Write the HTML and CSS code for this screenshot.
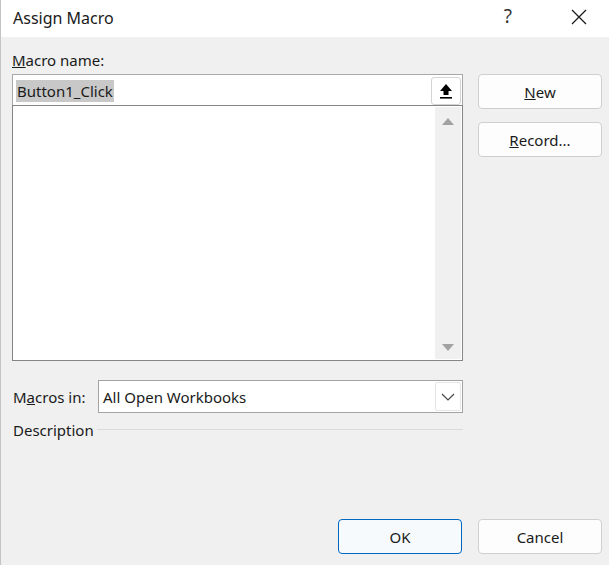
FILE: index.html
```html
<!DOCTYPE html>
<html>
<head>
<meta charset="utf-8">
<link rel="stylesheet" href="styles.css">
</head>
<body>
<div class="window">
  <div class="titlebar">
    <span class="title">Assign Macro</span>
    <span class="help">?</span>
    <span class="close">
      <svg width="16" height="16" viewBox="0 0 16 16"><path d="M1 1 L15 15 M15 1 L1 15" stroke="#1b1b1b" stroke-width="1.3" fill="none"/></svg>
    </span>
  </div>
  <div class="content">
    <div class="top">
      <div class="left">
        <div class="label"><u>M</u>acro name:</div>
        <div class="namebox">
          <span class="selected">Button1_Click</span>
          <span class="upbtn">
            <svg width="14" height="16" viewBox="0 0 14 16"><path d="M7 1 L13 8 L9.5 8 L9.5 12 L4.5 12 L4.5 8 L1 8 Z" fill="#000"/><rect x="1" y="14" width="12" height="1.6" fill="#000"/></svg>
          </span>
        </div>
        <div class="listbox">
          <div class="items"></div>
          <div class="scroll">
            <svg class="arr" width="14" height="9" viewBox="0 0 14 9"><path d="M7 1 L13 8 L1 8 Z" fill="#a2a2a2"/></svg>
            <svg class="arr" width="14" height="9" viewBox="0 0 14 9"><path d="M1 1 L13 1 L7 8 Z" fill="#a2a2a2"/></svg>
          </div>
        </div>
        <div class="inrow">
          <div class="inlabel">M<u>a</u>cros in:</div>
          <div class="select">
            <span class="seltext">All Open Workbooks</span>
            <span class="chev">
              <svg width="14" height="8" viewBox="0 0 14 8"><path d="M1 1 L7 7 L13 1" stroke="#444" stroke-width="1.1" fill="none"/></svg>
            </span>
          </div>
        </div>
        <div class="descrow">
          <span>Description</span>
          <span class="rule"></span>
        </div>
      </div>
      <div class="right">
        <button class="btn"><u>N</u>ew</button>
        <button class="btn"><u>R</u>ecord...</button>
      </div>
    </div>
    <div class="footer">
      <button class="btn ok">OK</button>
      <button class="btn">Cancel</button>
    </div>
  </div>
</div>
</body>
</html>
```

FILE: styles.css
```css
* { box-sizing: border-box; }
html, body { margin: 0; padding: 0; }
body {
  width: 609px;
  height: 565px;
  font-family: "Noto Sans", "Open Sans", sans-serif;
  font-size: 15px;
  color: #1a1a1a;
  overflow: hidden;
}
.window {
  width: 609px;
  height: 565px;
  display: flex;
  flex-direction: column;
  border-left: 1px solid #c4c4c4;
}
.titlebar {
  height: 37px;
  background: #ffffff;
  display: flex;
  align-items: center;
  padding-left: 12px;
}
.title {
  font-size: 16px;
  flex: 1;
  margin-top: -2px;
}
.help {
  font-size: 19px;
  color: #333;
  margin-right: 59px;
  margin-top: -5px;
}
.close {
  width: 16px;
  height: 16px;
  margin-right: 22px;
  margin-top: -4px;
  display: flex;
}
.content {
  flex: 1;
  background: #f0f0f0;
  display: flex;
  flex-direction: column;
  padding: 13px 7px 11px 11px;
}
.top {
  display: flex;
  gap: 15px;
}
.left {
  width: 451px;
  display: flex;
  flex-direction: column;
}
.label {
  height: 20px;
  line-height: 20px;
  margin-bottom: 4px;
}
.namebox {
  height: 31px;
  background: #fff;
  border: 1px solid #a8a8a8;
  border-bottom: none;
  display: flex;
  align-items: center;
  justify-content: space-between;
  padding: 0 1px 0 3px;
}
.selected {
  background: #c8c8c8;
  padding: 0 1px;
  line-height: 22px;
  height: 22px;
  margin-top: 1px;
}
.upbtn {
  width: 30px;
  height: 28px;
  border: 1px solid #d4d4d4;
  border-radius: 3px;
  background: #fff;
  display: flex;
  align-items: center;
  justify-content: center;
  margin-top: 2px;
}
.listbox {
  height: 256px;
  background: #fff;
  border: 1px solid #858585;
  display: flex;
}
.items { flex: 1; }
.scroll {
  width: 26px;
  margin: 1px 1px 1px 0;
  background: #f0f0f0;
  display: flex;
  flex-direction: column;
  justify-content: space-between;
  align-items: center;
  padding: 10px 0 7px;
}
.arr { display: block; }
.inrow {
  margin-top: 19px;
  display: flex;
  align-items: center;
}
.inlabel {
  width: 86px;
  padding-left: 1px;
}
.select {
  width: 365px;
  height: 33px;
  background: #fff;
  border: 1px solid #a3a3a3;
  display: flex;
  align-items: center;
  justify-content: space-between;
  padding: 0 1px 0 4px;
}
.chev {
  width: 26px;
  height: 29px;
  border: 1px solid #e6e6e6;
  border-radius: 2px;
  display: flex;
  align-items: center;
  justify-content: center;
}
.descrow {
  margin-top: 7px;
  display: flex;
  align-items: center;
  gap: 3px;
  padding-left: 1px;
}
.rule {
  flex: 1;
  height: 1px;
  background: #dadada;
  margin-top: -2px;
}
.right {
  width: 124px;
  padding-top: 24px;
  display: flex;
  flex-direction: column;
  gap: 13px;
}
.btn {
  width: 124px;
  height: 35px;
  font-family: inherit;
  font-size: 15px;
  color: #1a1a1a;
  background: #fdfdfd;
  border: 1px solid #cfcfcf;
  border-radius: 4px;
  padding: 0;
}
.footer {
  margin-top: auto;
  display: flex;
  justify-content: flex-end;
  gap: 16px;
}
.ok {
  border-color: #0067c0;
  background: #f7fafd;
}
```
